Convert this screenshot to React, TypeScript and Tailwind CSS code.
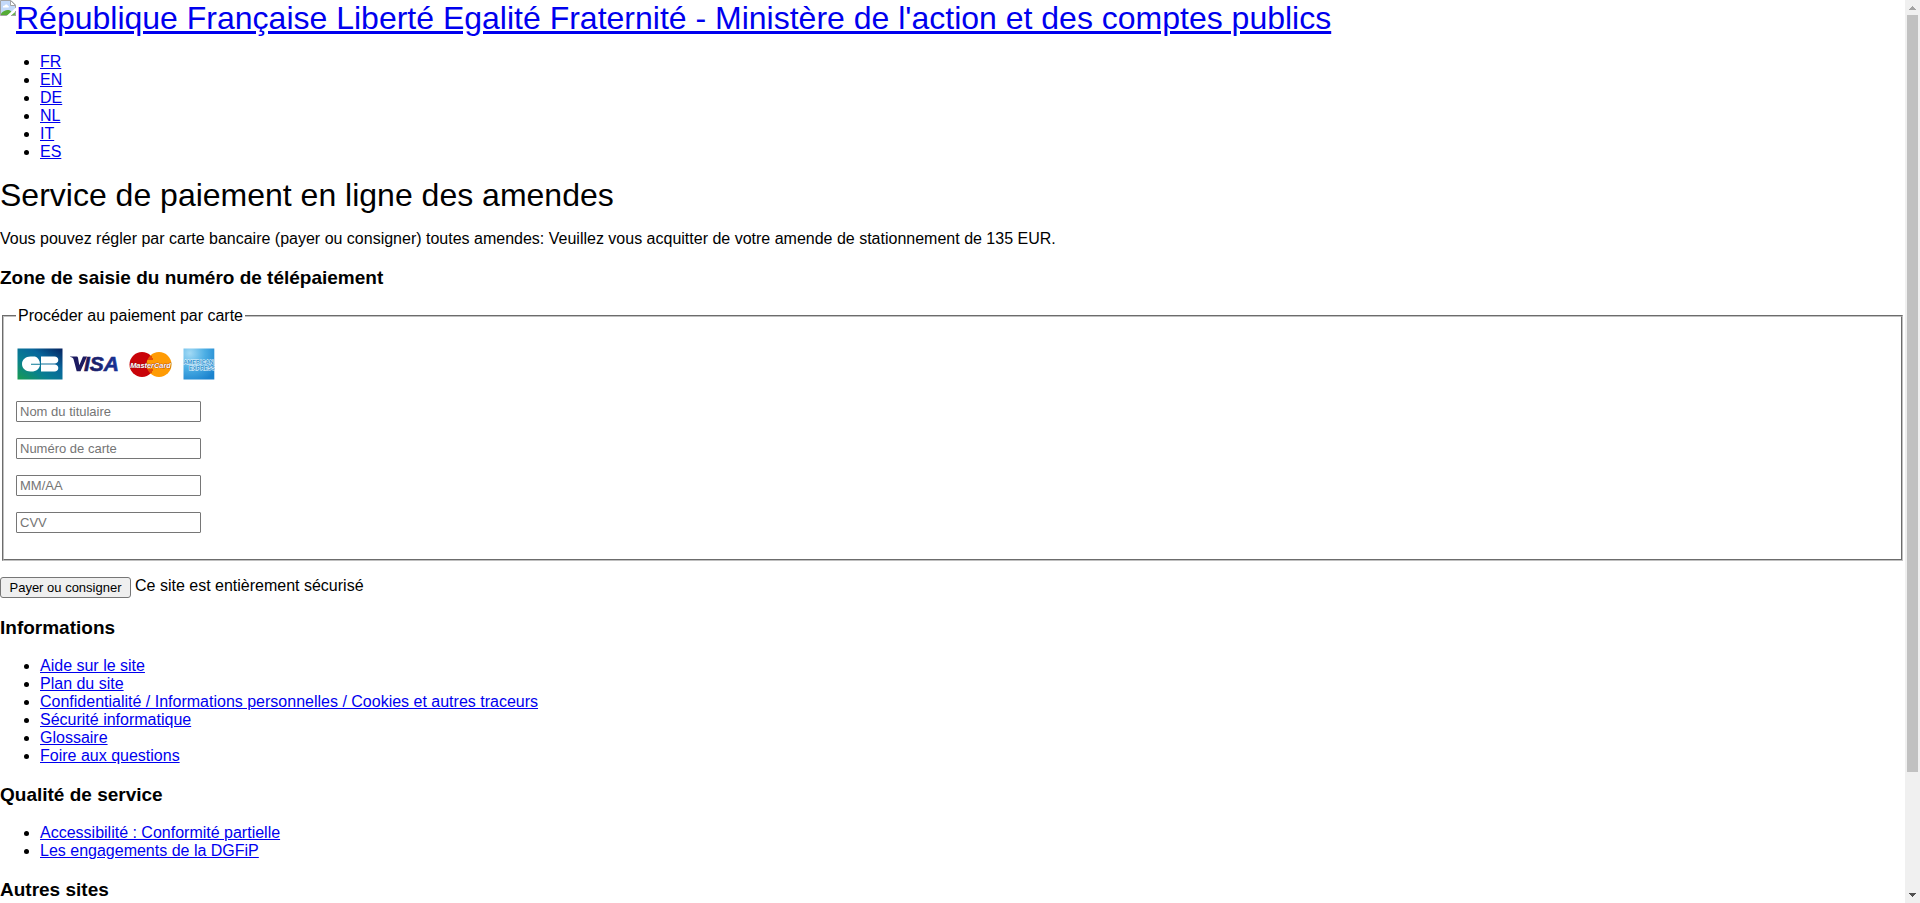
import React from "react";

const languages = ["FR", "EN", "DE", "NL", "IT", "ES"];

const informations = [
  "Aide sur le site",
  "Plan du site",
  "Confidentialité / Informations personnelles / Cookies et autres traceurs",
  "Sécurité informatique",
  "Glossaire",
  "Foire aux questions",
];

const quality = ["Accessibilité : Conformité partielle", "Les engagements de la DGFiP"];

const fields = [
  { id: "holder", label: "Nom du titulaire" },
  { id: "number", label: "Numéro de carte" },
  { id: "expiry", label: "MM/AA" },
  { id: "cvv", label: "CVV" },
];

function LinkList({ items }: { items: string[] }) {
  return (
    <ul className="list-disc pl-10">
      {items.map((item) => (
        <li key={item}>
          <a href="#" className="text-[#0000ee] underline">
            {item}
          </a>
        </li>
      ))}
    </ul>
  );
}

function SectionTitle({ children }: { children: React.ReactNode }) {
  return <h3 className="my-[19px] text-[19px] leading-[21px] font-bold">{children}</h3>;
}

function MissingImage() {
  return (
    <svg className="size-4 shrink-0" viewBox="0 0 16 16" aria-hidden="true">
      <path d="M0.5 0.5H11L15.5 5V15.5H0.5Z" fill="#c3d7f8" stroke="#a3a3a3" />
      <path d="M1 1H10.5V5.5H15V8L7 15H1Z" fill="#c3d9fa" />
      <path d="M3 7.5C2.6 6 4 5.3 4.8 5.7C5.2 4.2 7.6 4.3 7.8 5.8C9 5.7 9.3 7.5 8.3 7.5Z" fill="#fff" />
      <path d="M1 15V13.5C3 11 6 9.7 8.5 10C10 10.2 11 11 11.5 12L8.3 15Z" fill="#55ab36" />
      <path d="M10.5 0.5V5.5H15.5Z" fill="#fff" stroke="#a3a3a3" />
      <path d="M16 7.5L6.5 16H11L16 11.5Z" fill="#fff" />
      <path d="M11 15.5H15.5V11.7Z" fill="#65b548" />
      <path d="M11 15.5H15.5V11" fill="none" stroke="#a3a3a3" />
    </svg>
  );
}

function CardLogos() {
  return (
    <svg className="h-[39px] w-[205px]" viewBox="0 0 205 39" role="img" aria-label="CB, Visa, MasterCard, American Express">
      <defs>
        <linearGradient id="cb" x1="0" y1="1" x2="1" y2="0">
          <stop offset="0" stopColor="#199c50" />
          <stop offset="0.35" stopColor="#087f91" />
          <stop offset="0.65" stopColor="#08669b" />
          <stop offset="1" stopColor="#06225f" />
        </linearGradient>
        <linearGradient id="visa" x1="0" y1="0" x2="1" y2="0">
          <stop offset="0" stopColor="#1c1857" />
          <stop offset="1" stopColor="#17349a" />
        </linearGradient>
        <radialGradient id="amex" cx="0.2" cy="0.15" r="1">
          <stop offset="0" stopColor="#a3daf5" />
          <stop offset="0.5" stopColor="#4caee4" />
          <stop offset="1" stopColor="#1b83ce" />
        </radialGradient>
      </defs>

      <rect x="1.5" y="2.5" width="45" height="31" fill="url(#cb)" />
      <path d="M24 10.5H14.5C9.5 10.5 6 13.8 6 18C6 22.2 9.5 25.5 14.5 25.5H15.5C20.3 25.5 23.5 22.8 24 18.7H15V17.7H24C23.8 14.5 22 11.5 19 10.5Z" fill="#fff" />
      <path d="M25 10.5H38.5C40.7 10.5 42.3 12 42.3 14C42.3 16.1 40.7 17.6 38.5 17.6H25ZM25 18.6H38.5C40.7 18.6 42.3 20.1 42.3 22.1C42.3 24.1 40.7 25.6 38.5 25.6H25Z" fill="#fff" />

      <path d="M54 10.4H60.3C61.3 10.4 61.8 10.9 62 11.7L63.3 19.2L67 10.4H71L64.5 25.2H60.7L57.6 13.4C57.3 12.2 56 11.3 54 10.8Z" fill="#1c1a60" />
      <text x="68" y="25.4" fontFamily="Liberation Sans, Arial, sans-serif" fontSize="21" fontWeight="700" fontStyle="italic" fill="url(#visa)" stroke="url(#visa)" strokeWidth="0.6">
        ISA
      </text>

      <circle cx="126" cy="18.5" r="12.5" fill="#c90309" />
      <circle cx="143" cy="18.5" r="12.5" fill="#ff9b04" />
      <path d="M131 11H136M130.5 13H137M130.5 24H137M131 26H136" stroke="#c90309" strokeWidth="1" />
      <text x="134.5" y="21.5" textAnchor="middle" fontFamily="Liberation Sans, Arial, sans-serif" fontSize="7.4" fontWeight="700" fontStyle="italic" fill="#fff" stroke="#811316" strokeWidth="0.6" paintOrder="stroke">
        MasterCard
      </text>

      <rect x="167.5" y="2.5" width="31" height="31" fill="url(#amex)" />
      <g fontFamily="Liberation Sans, Arial, sans-serif" fontSize="5.6" fontWeight="700" fill="#2f91cf" stroke="#e8f6fd" strokeWidth="1" paintOrder="stroke">
        <text x="167.5" y="18">AMERICAN</text>
        <text x="173" y="24">EXPRESS</text>
      </g>
      <path d="M198.6 2V34H205V2Z" fill="#fff" />
    </svg>
  );
}

function ScrollTrack() {
  return (
    <div className="flex w-[15px] shrink-0 flex-col bg-[#f0f0f0]" aria-hidden="true">
      <svg className="h-[15px] w-[15px] shrink-0" viewBox="0 0 15 15" shapeRendering="crispEdges">
        <path d="M7 6H8V7H9V8H10V9H11V10H4V9H5V8H6V7H7Z" fill="#a3a3a3" />
      </svg>
      <div className="flex grow flex-col px-[2px]">
        <div className="grow-[757] basis-0 bg-[#c1c1c1]" />
        <div className="grow-[116] basis-0" />
      </div>
      <svg className="h-[15px] w-[15px] shrink-0" viewBox="0 0 15 15" shapeRendering="crispEdges">
        <path d="M4 5H11V6H10V7H9V8H8V9H7V8H6V7H5V6H4Z" fill="#505050" />
      </svg>
    </div>
  );
}

export default function App() {
  return (
    <div className="flex h-screen overflow-hidden bg-white font-['Liberation_Sans',Arial,sans-serif] text-base leading-[18px] text-black">
      <main className="min-w-0 grow overflow-hidden">
        <header>
          <a href="#" className="flex text-[32px] leading-[37px] text-[#0000ee] underline">
            <MissingImage />
            <span>République Française Liberté Egalité Fraternité - Ministère de l'action et des comptes publics</span>
          </a>
          <nav className="my-4">
            <LinkList items={languages} />
          </nav>
        </header>

        <h1 className="my-4 text-[32px] leading-[37px]">Service de paiement en ligne des amendes</h1>
        <p>
          Vous pouvez régler par carte bancaire (payer ou consigner) toutes amendes: Veuillez vous acquitter de votre
          amende de stationnement de 135 EUR.
        </p>

        <SectionTitle>Zone de saisie du numéro de télépaiement</SectionTitle>
        <form onSubmit={(event) => event.preventDefault()}>
          <fieldset className="mx-[2px] border-2 border-[#c0c0c0] px-3 pt-[5px] pb-[10px] [border-style:groove]">
            <legend className="px-[2px]">Procéder au paiement par carte</legend>
            <div className="my-4 flex flex-col items-start gap-4">
              <CardLogos />
              {fields.map((field) => (
                <input
                  key={field.id}
                  id={field.id}
                  type="text"
                  aria-label={field.label}
                  placeholder={field.label}
                  className="h-[21px] w-[185px] rounded-[1px] border border-[#767676] bg-white px-[3px] text-[13px] leading-[15px] placeholder:text-[#757575]"
                />
              ))}
            </div>
          </fieldset>
          <div className="mt-4 flex items-start gap-1">
            <button
              type="submit"
              className="h-[21px] w-[131px] rounded-[3px] border border-[#767676] bg-[#efefef] text-[13px] leading-[15px]"
            >
              Payer ou consigner
            </button>
            <span>Ce site est entièrement sécurisé</span>
          </div>
        </form>

        <footer>
          <SectionTitle>Informations</SectionTitle>
          <LinkList items={informations} />
          <SectionTitle>Qualité de service</SectionTitle>
          <LinkList items={quality} />
          <SectionTitle>Autres sites</SectionTitle>
        </footer>
      </main>
      <ScrollTrack />
    </div>
  );
}
